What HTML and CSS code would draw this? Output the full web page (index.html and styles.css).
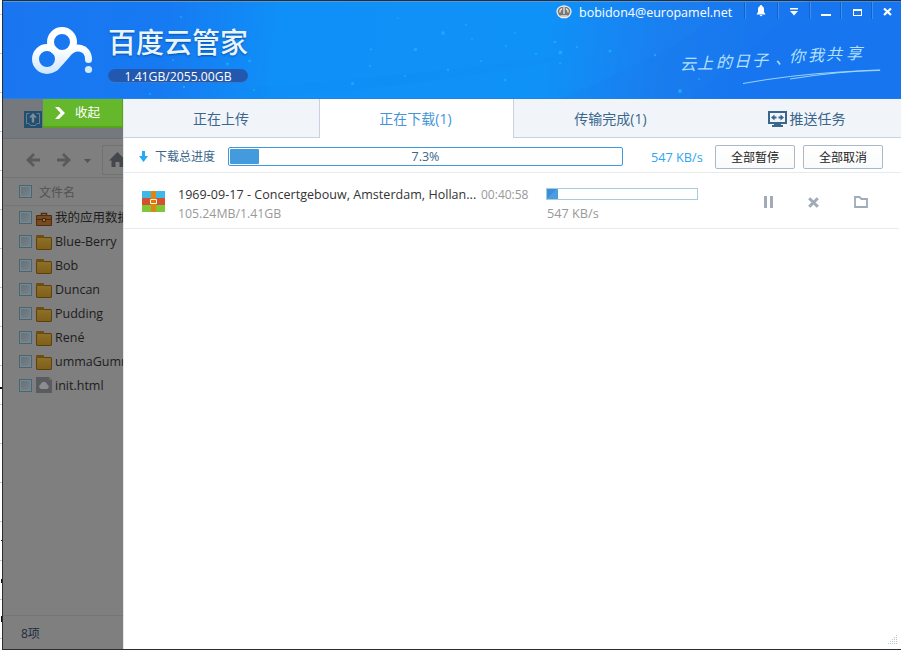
FILE: index.html
```
<!DOCTYPE html>
<html lang="zh-CN">
<head>
    <meta charset="UTF-8">
    <title>百度云管家</title>
    <link rel="stylesheet" href="styles.css">
</head>
<body>
    <div class="desktop">
        <i class="mark m1"></i><i class="mark m2"></i><i class="mark m3"></i><i class="mark m4"></i>
    </div>
    <div class="window">
        <header class="header">
            <svg class="sky" width="898" height="98" viewBox="3 1 898 98">
                <path d="M901 1H808L690 99H901z" fill="#1573f0" opacity=".35"/>
                <path d="M560 99Q750 20 700 1H808L690 99z" fill="#1672e8" opacity=".12"/>
                <path d="M240 88Q420 76 545 57L560 60Q430 85 250 99z" fill="#0b86f0" opacity=".12"/>
                <g fill="#1fb4fb" opacity=".75">
                    <circle cx="443" cy="33" r="1.8"/><circle cx="415.500" cy="49.500" r="1.7"/><circle cx="352.500" cy="83.500" r="1.5"/>
                    <circle cx="448" cy="70" r="1.2"/><circle cx="560.500" cy="52.500" r="1.9"/><circle cx="555" cy="42" r="1.3"/>
                    <circle cx="577" cy="47" r="1.1"/><circle cx="560" cy="63.500" r="1.1"/><circle cx="505" cy="80" r="1.2"/>
                    <circle cx="227.500" cy="64" r="1.4"/><circle cx="249.500" cy="61" r="1.4"/><circle cx="371" cy="49.500" r="1.1"/>
                    <circle cx="370" cy="66" r="1"/><circle cx="405" cy="76" r="1"/><circle cx="466" cy="25" r="1"/>
                    <circle cx="472" cy="39" r=".9"/><circle cx="506" cy="46" r="1"/><circle cx="481" cy="61" r="1"/>
                    <circle cx="680" cy="91" r="2"/><circle cx="610" cy="51" r="1.5"/><circle cx="655" cy="55" r="1.2"/>
                    <circle cx="699" cy="79" r="1"/><circle cx="184" cy="87" r="1.2"/><circle cx="254" cy="90" r="1"/>
                    <circle cx="181" cy="17" r="1"/><circle cx="536" cy="54" r="1"/><circle cx="398" cy="18" r=".8"/>
                    <circle cx="173" cy="60" r="1"/><circle cx="150" cy="94" r="1"/><circle cx="515" cy="33" r=".9"/>
                </g>
                <!-- slogan -->
                <g class="slogan">
                    <text y="70 69 68 67 66 64 62 61 60 59" x="680 697 716 734 752 775 789 808 826 846">云上的日子、你我共享</text>
                </g>
                <path d="M743 83.500Q790 75 840 72T878 70.500Q840 71 790 79" fill="none" stroke="#a9dcff" stroke-width=".9"/>
            </svg>

            <div class="brand">
                <svg class="logo" width="66" height="56" viewBox="30 24 66 56">
                    <defs>
                        <linearGradient id="cloud" gradientUnits="userSpaceOnUse" x1="0" y1="27" x2="0" y2="75">
                            <stop offset="0" stop-color="#fff"/>
                            <stop offset=".45" stop-color="#fff"/>
                            <stop offset="1" stop-color="#c9e5fd"/>
                        </linearGradient>
                    </defs>
                    <g fill="none" stroke="url(#cloud)" stroke-width="7" stroke-linecap="round">
                        <circle cx="62" cy="42" r="11.500"/>
                        <circle cx="47" cy="59" r="11.500"/>
                        <path d="M55.500 67.500L67 54.500C75 44 88.500 47 88.500 59.500"/>
                    </g>
                    <circle cx="88.500" cy="69.500" r="3.600" fill="#d3eafd"/>
                </svg>
                <div class="brand-text">
                    <h1>百度云管家</h1>
                    <div class="quota">1.41GB/2055.00GB</div>
                </div>
            </div>

            <div class="titlebar">
                <svg class="badge" width="16" height="14" viewBox="0 0 16 14">
                    <path d="M1 7Q1 3 5 1.500Q8 .5 11 1.500Q15 3 15 7L13.500 10.500L10.500 12.500H5.500L2.500 10.500z" fill="#777" stroke="#f4f0ea" stroke-width="1.300"/>
                    <path d="M8 2V9M6 3.500L4 5.500V7.500M10 3.500L12 5.500V7.500" fill="none" stroke="#f1e9df" stroke-width="1.300"/>
                    <path d="M4.500 11H11.500" stroke="#e6ded6" stroke-width="1.500"/>
                </svg>
                <span class="account">bobidon4@europamel.net</span>
                <span class="win-btn bell">
                    <svg width="10" height="12" viewBox="0 0 10 12"><path d="M5 0C5.800 0 6 .6 6 1C8 1.800 8 3.500 8 5V7L9.500 9.500H.5L2 7V5C2 3.500 2 1.800 4 1C4 .6 4.200 0 5 0zM3.500 10H6.500L5 11.500z" fill="#fff"/></svg>
                </span>
                <span class="win-btn menu">
                    <svg width="10" height="8" viewBox="0 0 10 8"><path d="M1 0H9V1.500H1zM1 3H9L5 7.500z" fill="#fff"/></svg>
                </span>
                <span class="win-btn min">
                    <svg width="10" height="8" viewBox="0 0 10 8"><path d="M0 5H10V7H0z" fill="#fff"/></svg>
                </span>
                <span class="win-btn max">
                    <svg width="9" height="7" viewBox="0 0 9 7"><path d="M0 0H9V7H0zM1 2V6H8V2z" fill="#fff" fill-rule="evenodd"/></svg>
                </span>
                <span class="win-btn close">
                    <svg width="9" height="8" viewBox="0 0 9 8"><path d="M1 .5L8 7M8 .5L1 7" stroke="#fff" stroke-width="2.200"/></svg>
                </span>
            </div>
        </header>

        <div class="body">
            <aside class="sidebar">
                <div class="tools">
                    <svg class="upload" width="18" height="17" viewBox="0 0 18 17">
                        <path d="M0 0H18V17H0z" fill="#224f70"/>
                        <path d="M5.500 2.500H2.500V12.500H5L6.500 14.500H11.500L13 12.500H15.500V2.500H12.500" fill="none" stroke="#687d8c"/>
                        <path d="M9 2L13 6.500H10.200V11.500H7.800V6.500H5z" fill="#7c8d99"/>
                    </svg>
                    <button class="collapse">
                        <svg width="10" height="12" viewBox="0 0 10 12"><path d="M0 0H4L10 6L4 12H0L5.500 6z" fill="#fff"/></svg>
                        收起
                    </button>
                </div>
                <div class="nav">
                    <svg width="14" height="14" viewBox="0 0 14 14"><path d="M8 1L2 7L8 13M2 7H14" fill="none" stroke="#575a5e" stroke-width="2.800"/></svg>
                    <svg class="fwd" width="14" height="14" viewBox="0 0 14 14"><path d="M6 1L12 7L6 13M12 7H0" fill="none" stroke="#575a5e" stroke-width="2.800"/></svg>
                    <svg class="drop" width="7" height="4" viewBox="0 0 7 4"><path d="M0 0H7L3.500 4z" fill="#515459"/></svg>
                    <div class="path">
                        <svg width="17" height="15" viewBox="0 0 17 15"><path d="M8.500 0L17 8.500H14.500V15H10.500V10H6.500V15H2.500V8.500H0z" fill="#44474d"/></svg>
                    </div>
                </div>
                <div class="row head"><i class="check"></i><span>文件名</span></div>
                <div class="files">
                    <div class="row">
                        <i class="check"></i>
                        <svg class="case" width="16" height="14" viewBox="0 0 16 14">
                            <path d="M5.500 4V1.500H10.500V4" fill="none" stroke="#4c2d12" stroke-width="1.500"/>
                            <path d="M.5 3.500H15.500V13.500H.5z" fill="#794a1d" stroke="#4e2e12"/>
                            <path d="M1 7.500H15" stroke="#46290e"/><path d="M6.500 6.500H9.500V9.500H6.500z" fill="#9b7b58" stroke="#3e240d"/>
                        </svg>
                        <span>我的应用数据</span>
                    </div>
                    <div class="row"><i class="check"></i><i class="folder"></i><span>Blue-Berry</span></div>
                    <div class="row"><i class="check"></i><i class="folder"></i><span>Bob</span></div>
                    <div class="row"><i class="check"></i><i class="folder"></i><span>Duncan</span></div>
                    <div class="row"><i class="check"></i><i class="folder"></i><span>Pudding</span></div>
                    <div class="row"><i class="check"></i><i class="folder"></i><span>René</span></div>
                    <div class="row"><i class="check"></i><i class="folder"></i><span>ummaGumma</span></div>
                    <div class="row">
                        <i class="check"></i>
                        <svg width="16" height="16" viewBox="0 0 16 16">
                            <path d="M0 0H13L16 3V16H0z" fill="#595b5e"/><path d="M13 0V3H16" fill="#6d6e70"/>
                            <path d="M5 12A2.400 2.400 0 0 1 4.500 7.500A3.500 3.500 0 0 1 11.300 7.500A2.400 2.400 0 0 1 11 12z" fill="#8b8d8f"/>
                        </svg>
                        <span>init.html</span>
                    </div>
                </div>
                <footer class="count">8项</footer>
            </aside>

            <main class="panel">
                <nav class="tabs">
                    <div class="tab">正在上传</div>
                    <div class="tab active">正在下载(1)</div>
                    <div class="tab">传输完成(1)</div>
                    <div class="tab push">
                        <svg width="19" height="16" viewBox="0 0 19 16">
                            <path d="M1 1H18V12H1z" fill="none" stroke="#3a668c" stroke-width="2"/>
                            <path d="M6 12H13V14H15V16H4V14H6z" fill="#3a668c"/>
                            <path d="M3 6.500L6.500 3.500V5.500H8.500V7.500H6.500V9.500zM16 6.500L12.500 3.500V5.500H10.500V7.500H12.500V9.500z" fill="#3a668c"/>
                        </svg>
                        推送任务
                    </div>
                </nav>

                <section class="total">
                    <svg width="9" height="11" viewBox="0 0 9 11"><path d="M3 0H6V5H9L4.500 11L0 5H3z" fill="#20aaf8"/></svg>
                    <span class="total-label">下载总进度</span>
                    <div class="progress"><div class="fill" style="width: 7.3%"></div><span>7.3%</span></div>
                    <span class="speed">547 KB/s</span>
                    <button class="btn">全部暂停</button>
                    <button class="btn">全部取消</button>
                </section>

                <section class="task">
                    <svg class="archive" width="23" height="21" viewBox="0 0 23 21">
                        <path d="M0 0H23V7H0z" fill="#3db8e7"/><path d="M0 7H23V14H0z" fill="#d5502f"/><path d="M0 14H23V21H0z" fill="#7dc738"/>
                        <path d="M9 0H14V21H9z" fill="#df860e"/><path d="M8.500 8.500H14.500V12.500H8.500z" fill="#d8780d" stroke="#fff4df"/>
                    </svg>
                    <div class="info">
                        <div class="line"><span class="name">1969-09-17 - Concertgebouw, Amsterdam, Hollan...</span><span class="time">00:40:58</span></div>
                        <div class="size">105.24MB/1.41GB</div>
                    </div>
                    <div class="state">
                        <div class="bar"><div class="bar-fill" style="width: 7.3%"></div></div>
                        <div class="rate">547 KB/s</div>
                    </div>
                    <div class="actions">
                        <svg width="9" height="12" viewBox="0 0 9 12"><path d="M0 0H3V12H0zM6 0H9V12H6z" fill="#a0aab8"/></svg>
                        <svg width="11" height="11" viewBox="0 0 11 11"><path d="M1.200 1.200L9.800 9.800M9.800 1.200L1.200 9.800" stroke="#a0aab8" stroke-width="3"/></svg>
                        <svg width="14" height="12" viewBox="0 0 14 12"><path d="M1 11V1H5.500L7.500 3H13V11z" fill="none" stroke="#a0aab8" stroke-width="1.800"/></svg>
                    </div>
                </section>
                <svg class="grip" width="9" height="9" viewBox="0 0 9 9"><path d="M8 0h1v1h-1zM6 2h1v1h-1zM8 2h1v1h-1zM4 4h1v1h-1zM6 4h1v1h-1zM8 4h1v1h-1zM2 6h1v1h-1zM4 6h1v1h-1zM6 6h1v1h-1zM8 6h1v1h-1zM0 8h1v1h-1zM2 8h1v1h-1zM4 8h1v1h-1zM6 8h1v1h-1zM8 8h1v1h-1z" fill="#b3c9d4"/></svg>
            </main>
        </div>
    </div>
</body>
</html>
```
FILE: styles.css
```
* { box-sizing: border-box; }
body {
    margin: 0;
    width: 901px;
    height: 650px;
    display: flex;
    overflow: hidden;
    background: #fff;
    font: 12.5px/18px "Open Sans", "Noto Sans CJK SC", sans-serif;
}
svg { display: block; flex: none; }
button { font: inherit; padding: 0; }

/* sliver of the page behind the window */
.desktop {
    width: 2px;
    position: relative;
    background: repeating-linear-gradient(#fff 0 38px, #c8c8c8 38px 39px) 0 -24px;
    background-size: 2px 1000px;
}
.mark { position: absolute; left: 1px; width: 1px; background: #111; }
.m1 { left: 0; width: 2px; top: 387px; height: 2px; }
.m2 { top: 540px; height: 1px; }
.m3 { top: 579px; height: 4px; }
.m4 { top: 616px; height: 6px; }

.window {
    width: 899px;
    display: flex;
    flex-direction: column;
    border: 1px solid #2b2c34;
    border-right: 0;
}

.header {
    position: relative;
    height: 98px;
    display: flex;
    justify-content: space-between;
    background: linear-gradient(97deg, #1a76f0 0%, #167af2 18%, #0f90f8 31%, #0f92f8 60%, #1a7ff0 73%, #1877ef 84%);
    border-top: 1px solid #4a9be8;
    border-bottom: 1px solid #2382e4;
    color: #fff;
}
.sky { position: absolute; left: 0; top: -1px; }
.slogan { font-family: "Noto Sans CJK SC", sans-serif; font-size: 16px; font-style: italic; fill: #b5e0ff; }
.brand { position: relative; display: flex; padding: 22px 0 0 27px; }
.brand-text { padding-left: 12px; }
h1 {
    margin: -1px 0 0;
    font: 500 28px/36px "Noto Sans CJK SC", sans-serif;
    color: #e9f5fe;
    text-shadow: 0 1px 2px #0a4fa5;
}
.quota {
    width: 140px;
    height: 14px;
    margin-top: 10px;
    border-radius: 7px;
    background: #2259ae;
    border-bottom: 1px solid #3779cf;
    font-size: 12.2px;
    line-height: 15px;
    text-align: center;
}
.titlebar { position: relative; display: flex; height: 20px; }
.badge { margin: 3px 7px 0 0; }
.account { width: 165px; line-height: 21px; font-size: 12.5px; }
.win-btn {
    height: 17px;
    display: flex;
    justify-content: center;
    align-items: center;
    padding-top: 2px;
    border-left: 1px solid #1561c8;
    box-shadow: inset 1px 0 #3c8ff2;
}
.bell { width: 33px; padding: 1px 1px 0 0; }
.menu { width: 32px; padding-top: 3px; }
.min { width: 31px; padding: 4px 0 0 1px; }
.max { width: 31px; padding: 4px 0 0 2px; }
.close { width: 30px; padding: 3px 0 0 2px; }

.body { flex: 1; display: flex; min-height: 0; }

.sidebar {
    width: 120px;
    display: flex;
    flex-direction: column;
    overflow: hidden;
    background: #7f7f7f;
    white-space: nowrap;
    color: #1d1d1d;
}
.tools {
    height: 40px;
    display: flex;
    background: #75797d;
    border-bottom: 1px solid #687177;
}
.upload { margin: 12px 1px 0 21px; }
.collapse {
    width: 80px;
    height: 29px;
    display: flex;
    align-items: center;
    gap: 10px;
    padding: 1px 0 0 12px;
    border: 0;
    border-bottom: 2px solid #55a51c;
    border-right: 1px solid #55a51c;
    background: #65b72c;
    color: #fff;
}
.nav {
    height: 39px;
    display: flex;
    align-items: center;
    padding: 3px 0 0 23px;
    border-bottom: 1px solid #717375;
}
.fwd { margin-left: 17px; }
.drop { margin: 3px 11px 0 13px; }
.path { flex: none; width: 40px; height: 30px; padding: 6px; border: 1px solid #6f7173; }
.row {
    height: 24px;
    display: flex;
    align-items: center;
    padding-left: 16px;
}
.row > svg { margin-right: 3px; }
.row > span { padding-top: 2px; }
.row .case { margin-top: 4px; }
.row.head { height: 28px; border-bottom: 1px solid #737577; color: #505356; font-size: 12px; }
.head .check { margin-right: 7px; }
.files { margin-top: -1px; }
.check {
    flex: none;
    width: 13px;
    height: 13px;
    margin-right: 4px;
    border: 1px solid #456675;
    background: linear-gradient(135deg, #5d727e, #7e8384);
    box-shadow: inset 0 0 0 1px #7d868b;
}
.folder {
    flex: none;
    position: relative;
    width: 16px;
    height: 13px;
    margin: 4px 3px 0 0;
    border: 1px solid #5c410e;
    border-radius: 1px;
    background: linear-gradient(#8d6f28, #806019);
}
.folder::before {
    content: "";
    position: absolute;
    left: -1px;
    top: -3px;
    width: 8px;
    height: 3px;
    border-radius: 1px 1px 0 0;
    background: #6b4e12;
}
.count {
    margin-top: auto;
    height: 34px;
    padding: 9px 18px;
    border-top: 1px solid #737678;
    font-size: 12px;
    color: #1c2d40;
}

.panel { position: relative; flex: 1; background: #fff; border-left: 1px solid #e4e6e8; }
.tabs {
    height: 39px;
    display: grid;
    grid-template-columns: 195px 195px 194px 1fr;
    font-size: 14px;
    color: #3a668c;
}
.tab {
    display: flex;
    justify-content: center;
    align-items: center;
    gap: 3px;
    padding: 2px 1px 0 0;
    background: #f1f5fa;
    border-bottom: 1px solid #c6d3df;
}
.tab.active {
    padding: 0 2px 0 0;
    background: #fff;
    color: #4494d8;
    border: solid #c6d3df;
    border-width: 0 1px;
}
.tab.push { padding: 2px 0 0 4px; }
.total {
    height: 35px;
    display: flex;
    align-items: center;
    padding: 3px 0 0 15px;
    border-bottom: 1px solid #e9eaec;
    color: #3a668c;
}
.total-label { width: 73px; margin-left: 7px; font-size: 12px; }
.progress {
    position: relative;
    width: 395px;
    height: 19px;
    padding: 1px;
    border: 1px solid #4099dc;
    border-radius: 2px;
    line-height: 18px;
    text-align: center;
}
.progress span { position: absolute; left: 0; right: 0; top: 0; }
.fill { height: 15px; background: #439adc; border-radius: 1px; }
.speed { width: 64px; margin-left: 28px; color: #30a5f2; font-size: 12.7px; }
.btn {
    width: 80px;
    height: 24px;
    margin-right: 8px;
    border: 1px solid #aab9c8;
    border-radius: 2px;
    background: linear-gradient(#fff, #f9fafb);
    color: #222;
    font-size: 12px;
    padding-top: 2px;
}
.task {
    height: 56px;
    display: flex;
    padding-left: 18px;
    border-bottom: 1px solid #e9eaec;
    margin-right: 2px;
    font-size: 12px;
}
.archive { margin: 18px 13px 0 0; }
.info { width: 368px; padding-top: 13px; color: #999; }
.line { display: flex; white-space: nowrap; height: 19px; }
.name { width: 303px; color: #333; font-size: 12.5px; letter-spacing: .04px; }
.size { font-size: 12.3px; }
.state { width: 152px; padding-top: 15px; color: #999; }
.bar { height: 12px; border: 1px solid #a9cbdc; margin-bottom: 4px; }
.bar-fill { height: 10px; background: linear-gradient(135deg, #3b8fd8 45%, #4b9ce0 45%); }
.rate { padding-left: 1px; font-size: 12.7px; }
.actions { display: flex; align-items: center; gap: 35px; padding: 3px 0 0 66px; }
.grip { position: absolute; right: 4px; bottom: 5px; }
```
